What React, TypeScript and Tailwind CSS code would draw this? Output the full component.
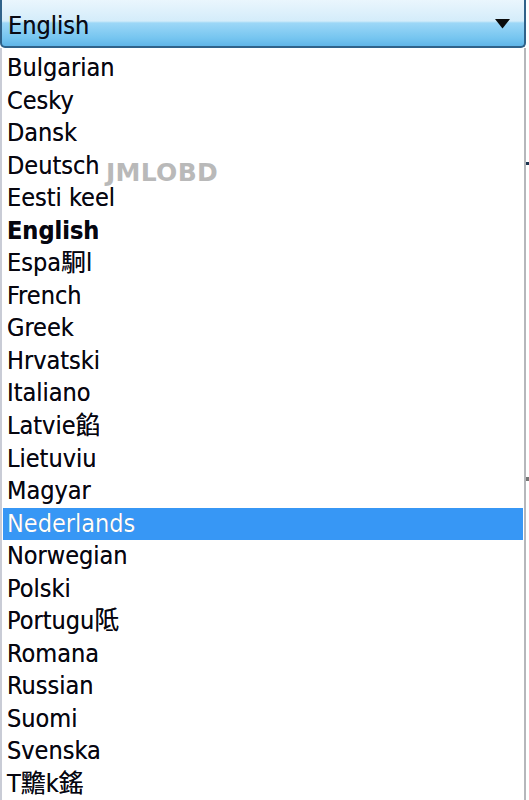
const languages = [
  "Bulgarian",
  "Cesky",
  "Dansk",
  "Deutsch",
  "Eesti keel",
  "English",
  "Espa駉l",
  "French",
  "Greek",
  "Hrvatski",
  "Italiano",
  "Latvie餡",
  "Lietuviu",
  "Magyar",
  "Nederlands",
  "Norwegian",
  "Polski",
  "Portugu阺",
  "Romana",
  "Russian",
  "Suomi",
  "Svenska",
  "T黵k鎐",
];

const current = "English";
const hovered = "Nederlands";

export default function App() {
  return (
    <div className="relative w-[529px] h-[800px] overflow-hidden bg-white font-['DejaVu_Sans_Condensed','DejaVu_Sans','Noto_Sans_CJK_TC',sans-serif] [font-stretch:condensed] text-[25px] text-black [text-shadow:0_0_0.6px_rgba(0,0,20,0.6)]">
      {/* Combo box head */}
      <div className="relative w-[526px] h-[48px] flex items-center justify-between pl-[6px] pr-[14px] border-x-2 border-b-2 border-[#2f628a] rounded-b-[5px] bg-[linear-gradient(to_bottom,#eaf6fd_0px,#d4ecfa_21px,#9cd7f7_23px,#76c5f0_38px,#5fb5e8_46px)]">
        <span className="leading-none pt-[4px] text-[#0a0a14]">{current}</span>
        <svg width="15" height="10" viewBox="0 0 15 10" className="mt-[2px]">
          <path d="M0 0 H15 L7.5 9.5 Z" fill="#0b0b0b" />
        </svg>
      </div>

      {/* Drop-down list */}
      <div className="flex">
        <div className="w-[526px] h-[752px] border-l-2 border-r-2 border-l-[#c9ccd6] border-r-[#b5b7bb] bg-white pt-[4px] px-[1px]">
          {languages.map((lang) => (
            <div
              key={lang}
              className={`h-[32.55px] leading-[32.55px] pl-[4px] whitespace-nowrap ${
                lang === hovered ? "bg-[#3797f5] text-white" : "text-[#06060f]"
              } ${lang === current ? "font-bold" : ""}`}
            >
              {lang}
            </div>
          ))}
        </div>
        <div className="relative flex-1 bg-white">
          <div className="absolute left-0 top-[114px] w-[3px] h-[3px] bg-[#1c3550]" />
          <div className="absolute left-0 top-[429px] w-[3px] h-[4px] bg-[#777]" />
        </div>
      </div>

      {/* Watermark */}
      <span className="absolute left-[106px] top-[160px] font-['DejaVu_Sans','Liberation_Sans',sans-serif] [font-stretch:normal] [text-shadow:none] font-bold text-[25px] leading-none tracking-[0.3px] text-[#b9b9b9]">
        JMLOBD
      </span>
    </div>
  );
}
